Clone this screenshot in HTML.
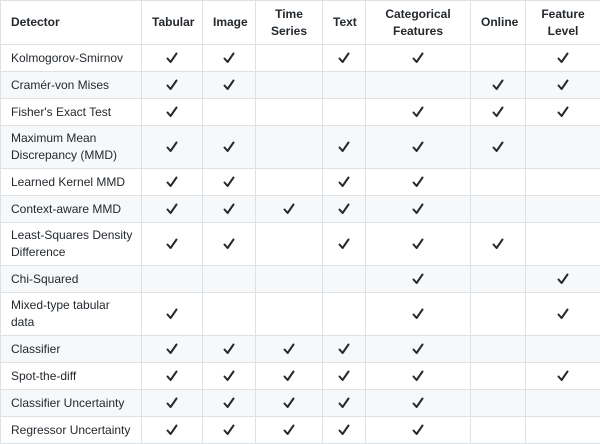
<!DOCTYPE html>
<html><head><meta charset="utf-8"><style>
html,body{margin:0;padding:0;background:#fff;}
table{border-collapse:collapse;font-family:"Liberation Sans",Arial,sans-serif;font-size:12px;color:#24292e;width:600px;table-layout:fixed;}
td,th{border:1px solid #dfe2e5;padding:0 10px;line-height:17px;}
th{font-weight:bold;text-align:center;height:43px;}
th:first-child{text-align:left;}
td{text-align:center;height:26px;}
td:first-child{text-align:left;padding-right:2px;}
tr.d td{height:42px;}
tbody tr:nth-child(even) td{background:#f6f8fa;}
b{display:inline-block;width:12px;height:12px;vertical-align:middle;background:url("#") ;}
svg{display:block;margin:0 auto;}
</style></head><body>
<svg width="0" height="0" style="position:absolute"><defs><symbol id="c" viewBox="0 0 12 12"><path d="M1.5 6.5 L4.6 10 L10.5 1.5" fill="none" stroke="#24292e" stroke-width="2" stroke-linecap="round" stroke-linejoin="round"/></symbol></defs></svg>
<table>
<colgroup><col style="width:141px"><col style="width:61px"><col style="width:53px"><col style="width:67px"><col style="width:43px"><col style="width:105px"><col style="width:55px"><col style="width:75px"></colgroup>
<thead><tr><th>Detector</th><th>Tabular</th><th>Image</th><th>Time<br>Series</th><th>Text</th><th>Categorical<br>Features</th><th>Online</th><th>Feature<br>Level</th></tr></thead>
<tbody>
<tr><td>Kolmogorov-Smirnov</td><td><svg width="12" height="12"><use href="#c"/></svg></td><td><svg width="12" height="12"><use href="#c"/></svg></td><td></td><td><svg width="12" height="12"><use href="#c"/></svg></td><td><svg width="12" height="12"><use href="#c"/></svg></td><td></td><td><svg width="12" height="12"><use href="#c"/></svg></td></tr>
<tr><td>Cramér-von Mises</td><td><svg width="12" height="12"><use href="#c"/></svg></td><td><svg width="12" height="12"><use href="#c"/></svg></td><td></td><td></td><td></td><td><svg width="12" height="12"><use href="#c"/></svg></td><td><svg width="12" height="12"><use href="#c"/></svg></td></tr>
<tr><td>Fisher's Exact Test</td><td><svg width="12" height="12"><use href="#c"/></svg></td><td></td><td></td><td></td><td><svg width="12" height="12"><use href="#c"/></svg></td><td><svg width="12" height="12"><use href="#c"/></svg></td><td><svg width="12" height="12"><use href="#c"/></svg></td></tr>
<tr class="d"><td>Maximum Mean<br>Discrepancy (MMD)</td><td><svg width="12" height="12"><use href="#c"/></svg></td><td><svg width="12" height="12"><use href="#c"/></svg></td><td></td><td><svg width="12" height="12"><use href="#c"/></svg></td><td><svg width="12" height="12"><use href="#c"/></svg></td><td><svg width="12" height="12"><use href="#c"/></svg></td><td></td></tr>
<tr><td>Learned Kernel MMD</td><td><svg width="12" height="12"><use href="#c"/></svg></td><td><svg width="12" height="12"><use href="#c"/></svg></td><td></td><td><svg width="12" height="12"><use href="#c"/></svg></td><td><svg width="12" height="12"><use href="#c"/></svg></td><td></td><td></td></tr>
<tr><td>Context-aware MMD</td><td><svg width="12" height="12"><use href="#c"/></svg></td><td><svg width="12" height="12"><use href="#c"/></svg></td><td><svg width="12" height="12"><use href="#c"/></svg></td><td><svg width="12" height="12"><use href="#c"/></svg></td><td><svg width="12" height="12"><use href="#c"/></svg></td><td></td><td></td></tr>
<tr class="d"><td>Least-Squares Density<br>Difference</td><td><svg width="12" height="12"><use href="#c"/></svg></td><td><svg width="12" height="12"><use href="#c"/></svg></td><td></td><td><svg width="12" height="12"><use href="#c"/></svg></td><td><svg width="12" height="12"><use href="#c"/></svg></td><td><svg width="12" height="12"><use href="#c"/></svg></td><td></td></tr>
<tr><td>Chi-Squared</td><td></td><td></td><td></td><td></td><td><svg width="12" height="12"><use href="#c"/></svg></td><td></td><td><svg width="12" height="12"><use href="#c"/></svg></td></tr>
<tr class="d"><td>Mixed-type tabular<br>data</td><td><svg width="12" height="12"><use href="#c"/></svg></td><td></td><td></td><td></td><td><svg width="12" height="12"><use href="#c"/></svg></td><td></td><td><svg width="12" height="12"><use href="#c"/></svg></td></tr>
<tr><td>Classifier</td><td><svg width="12" height="12"><use href="#c"/></svg></td><td><svg width="12" height="12"><use href="#c"/></svg></td><td><svg width="12" height="12"><use href="#c"/></svg></td><td><svg width="12" height="12"><use href="#c"/></svg></td><td><svg width="12" height="12"><use href="#c"/></svg></td><td></td><td></td></tr>
<tr><td>Spot-the-diff</td><td><svg width="12" height="12"><use href="#c"/></svg></td><td><svg width="12" height="12"><use href="#c"/></svg></td><td><svg width="12" height="12"><use href="#c"/></svg></td><td><svg width="12" height="12"><use href="#c"/></svg></td><td><svg width="12" height="12"><use href="#c"/></svg></td><td></td><td><svg width="12" height="12"><use href="#c"/></svg></td></tr>
<tr><td>Classifier Uncertainty</td><td><svg width="12" height="12"><use href="#c"/></svg></td><td><svg width="12" height="12"><use href="#c"/></svg></td><td><svg width="12" height="12"><use href="#c"/></svg></td><td><svg width="12" height="12"><use href="#c"/></svg></td><td><svg width="12" height="12"><use href="#c"/></svg></td><td></td><td></td></tr>
<tr><td>Regressor Uncertainty</td><td><svg width="12" height="12"><use href="#c"/></svg></td><td><svg width="12" height="12"><use href="#c"/></svg></td><td><svg width="12" height="12"><use href="#c"/></svg></td><td><svg width="12" height="12"><use href="#c"/></svg></td><td><svg width="12" height="12"><use href="#c"/></svg></td><td></td><td></td></tr>
</tbody></table>
</body></html>
